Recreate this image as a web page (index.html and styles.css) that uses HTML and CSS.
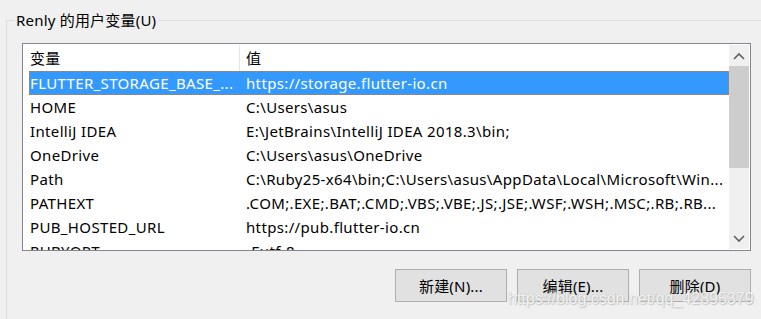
FILE: index.html
```html
<!DOCTYPE html>
<html lang="zh-CN">

<head>
  <meta charset="UTF-8">
  <meta name="viewport" content="width=device-width, initial-scale=1.0">
  <title>用户变量</title>
  <link rel="stylesheet" href="styles.css">
</head>

<body>
  <fieldset class="group">
    <legend>Renly 的用户变量(U)</legend>
    <div class="list">
      <div class="grid">
        <div class="head">
          <span class="h1">变量</span>
          <span class="h2">值</span>
        </div>
        <div class="row selected"><span class="c1">FLUTTER_STORAGE_BASE_...</span><span class="c2">https://storage.flutter-io.cn</span></div>
        <div class="row"><span class="c1">HOME</span><span class="c2">C:\Users\asus</span></div>
        <div class="row"><span class="c1">IntelliJ IDEA</span><span class="c2">E:\JetBrains\IntelliJ IDEA 2018.3\bin;</span></div>
        <div class="row"><span class="c1">OneDrive</span><span class="c2">C:\Users\asus\OneDrive</span></div>
        <div class="row"><span class="c1">Path</span><span class="c2">C:\Ruby25-x64\bin;C:\Users\asus\AppData\Local\Microsoft\Win...</span></div>
        <div class="row"><span class="c1">PATHEXT</span><span class="c2">.COM;.EXE;.BAT;.CMD;.VBS;.VBE;.JS;.JSE;.WSF;.WSH;.MSC;.RB;.RB...</span></div>
        <div class="row"><span class="c1">PUB_HOSTED_URL</span><span class="c2">https://pub.flutter-io.cn</span></div>
        <div class="row"><span class="c1">RUBYOPT</span><span class="c2">-Eutf-8</span></div>
      </div>
      <div class="scroll">
        <div class="arrow">
          <svg width="12" height="8" viewBox="0 0 12 8"><path d="M1 7 L6 2 L11 7" fill="none" stroke="#606060" stroke-width="1.6"/></svg>
        </div>
        <div class="thumb"></div>
        <div class="track"></div>
        <div class="arrow">
          <svg width="12" height="8" viewBox="0 0 12 8"><path d="M1 1 L6 6 L11 1" fill="none" stroke="#606060" stroke-width="1.6"/></svg>
        </div>
      </div>
    </div>
    <div class="buttons">
      <button class="btn">新建(N)...</button>
      <button class="btn">编辑(E)...</button>
      <button class="btn">删除(D)</button>
    </div>
  </fieldset>
  <div class="watermark">https://blog.csdn.net/qq_42895379</div>
</body>

</html>
```

FILE: styles.css
```css
html,
body {
  margin: 0;
  height: 319px;
  overflow: hidden;
  background-color: #f0f0f0;
}

body {
  font-family: "Segoe UI", "Noto Sans", "Noto Sans CJK SC", sans-serif;
  font-size: 15px;
  color: #000;
  position: relative;
}

.group {
  margin: 10px 0 0 6px;
  padding: 13px 10px 30px 15px;
  border: 1px solid #dcdcdc;
  border-right: none;
  border-bottom: none;
  min-width: 0;
}

.group legend {
  margin-left: -8px;
  padding: 0 2px;
  line-height: 20px;
  letter-spacing: 0.2px;
}

.list {
  display: flex;
  width: 727px;
  height: 206px;
  border: 1px solid #828790;
  background-color: #fff;
  overflow: hidden;
}

.grid {
  width: 706px;
  overflow: hidden;
  letter-spacing: 0.35px;
}

.head {
  display: flex;
  height: 27px;
  align-items: center;
}

.h1 {
  width: 209px;
  padding-left: 7px;
  line-height: 26px;
  border-right: 1px solid #e5e5e5;
}

.h2 {
  padding-left: 6px;
}

.row {
  display: flex;
  margin-left: 6px;
  width: 698px;
  height: 22px;
  line-height: 22px;
  border: 1px solid transparent;
  white-space: nowrap;
}

.row.selected {
  background-color: #3399ff;
  color: #fff;
  border: 1px dotted #d87a1c;
}

.c1 {
  width: 216px;
  flex: none;
  overflow: hidden;
}

.c2 {
  overflow: hidden;
}

.scroll {
  display: flex;
  flex-direction: column;
  width: 20px;
  margin: 1px 1px 0 0;
  height: 204px;
  background-color: #f0f0f0;
}

.arrow {
  height: 21px;
  display: flex;
  align-items: center;
  justify-content: center;
}

.thumb {
  height: 102px;
  background-color: #cdcdcd;
}

.track {
  flex: 1;
}

.buttons {
  display: flex;
  justify-content: flex-end;
  gap: 10px;
  margin-top: 18px;
}

.btn {
  width: 112px;
  height: 33px;
  padding: 0;
  font-family: "Segoe UI", "Noto Sans", "Noto Sans CJK SC", sans-serif;
  font-size: 15px;
  letter-spacing: 0.2px;
  color: #000;
  background-color: #e1e1e1;
  border: 1px solid #adadad;
}

.watermark {
  position: absolute;
  left: 508px;
  top: 290px;
  white-space: nowrap;
  font-family: "Liberation Sans", Arial, sans-serif;
  font-size: 16px;
  color: rgba(255, 255, 255, 0.85);
  text-shadow: 0 0 1px #b0b0b0, 1px 1px 1px #c8c8c8;
}
```
